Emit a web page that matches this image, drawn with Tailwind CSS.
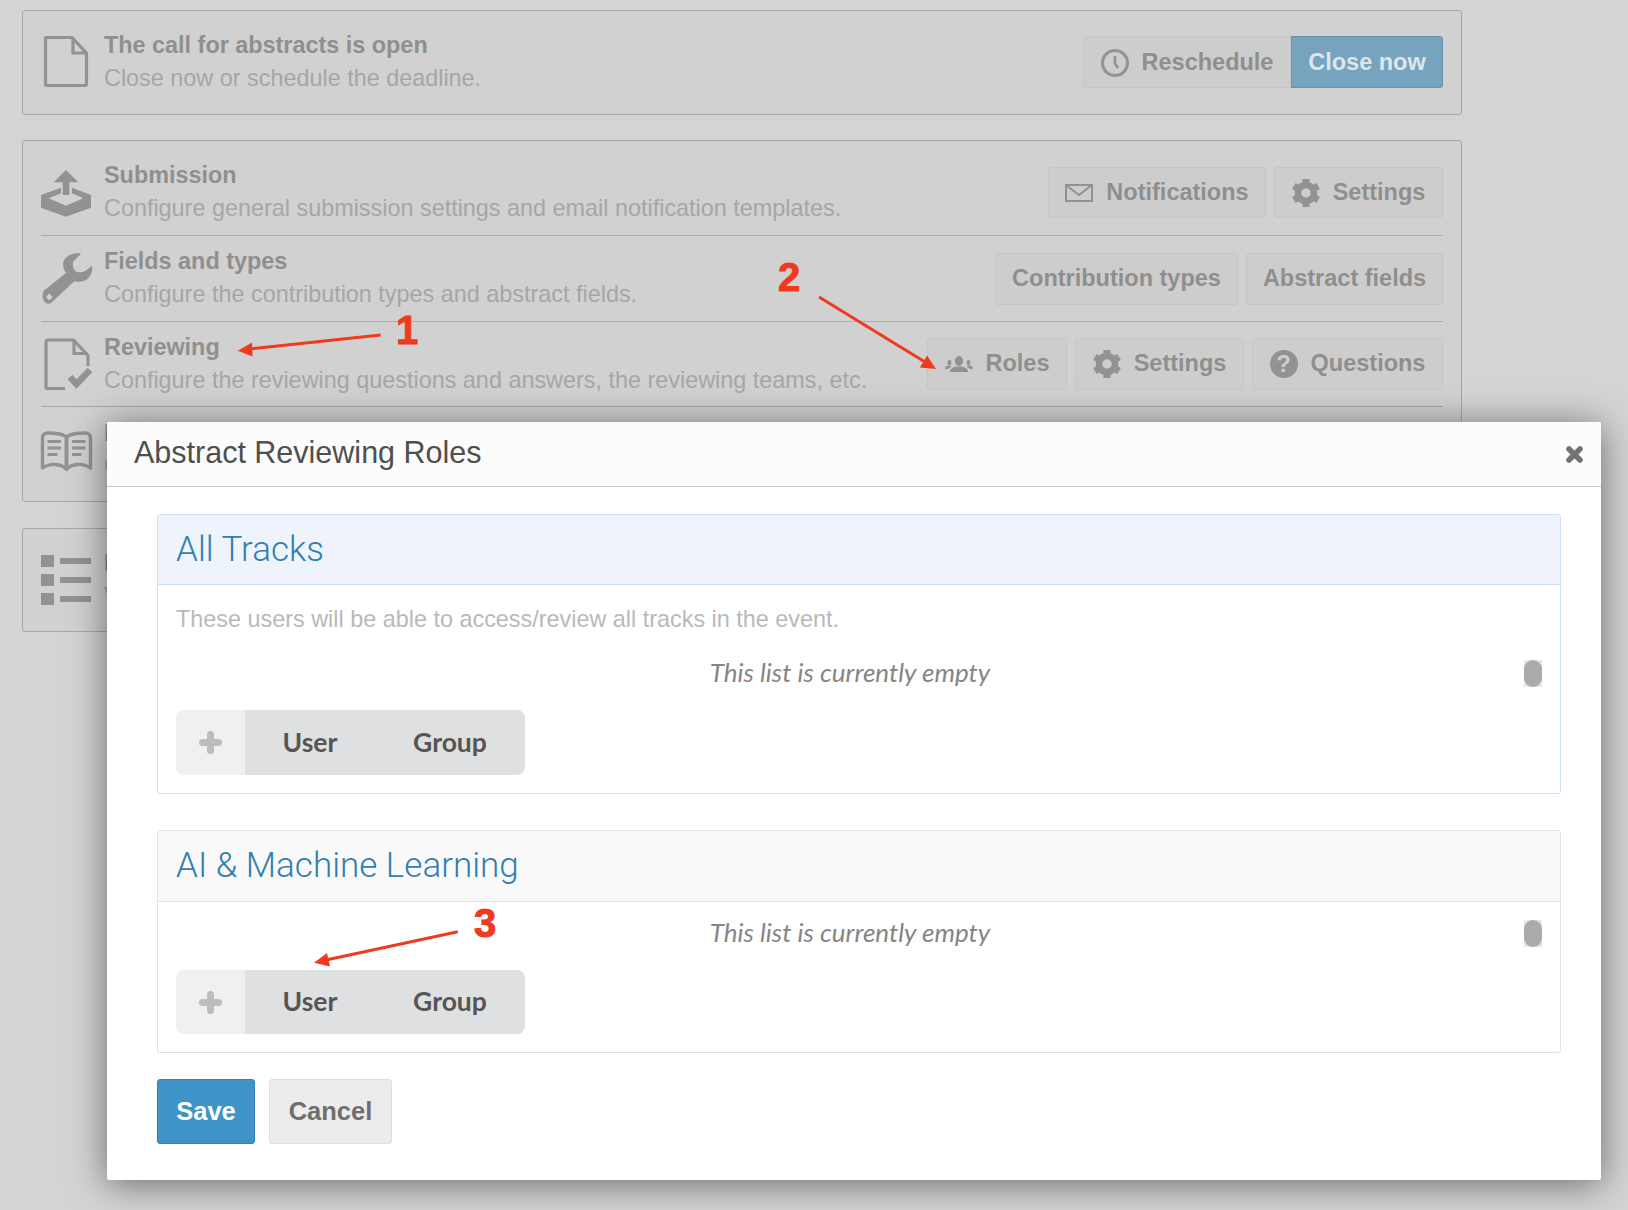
<!DOCTYPE html>
<html lang="en">
<head>
  <meta charset="UTF-8" /><meta name="viewport" content="width=device-width, initial-scale=1.0" />
  <title>Abstract Reviewing Roles</title>
  <script src="https://cdn.jsdelivr.net/npm/@tailwindcss/browser@4"></script>
</head>
<body class="bg-[#d4d4d4] font-['Liberation_Sans',Arial,sans-serif]">
  <div class="relative w-[1628px] h-[1210px] overflow-hidden">

    <!-- Page behind the dialog -->
    <div class="w-[1440px] ml-[22px] pt-[10px]">
      <div class="h-[105px] px-[18px] pb-[1px] flex items-center bg-[#d1d1d1] border border-[#a6a6a6] rounded-[3px]">
        <svg class="w-[64px] h-[64px] -ml-[5px] mr-[4px] shrink-0 text-[#929292]" viewBox="0 0 64 64" fill="none" stroke="currentColor" stroke-width="3.2">
          <path d="M10 7.5H36L50.5 23V54a1.5 1.5 0 0 1-1.5 1.5H11a1.5 1.5 0 0 1-1.5-1.5V8a.5.5 0 0 1 .5-.5z" stroke-linejoin="round"/>
          <path d="M37 8V23H50"/>
        </svg>
        <div class="flex-1">
          <div class="text-[23.4px] leading-[33px] font-bold text-[#8f8f8f]">The call for abstracts is open</div>
          <div class="text-[23.4px] leading-[33px] text-[#a6a6a6]">Close now or schedule the deadline.</div>
        </div>
        <div class="flex">
          <div class="h-[52px] w-[208px] pt-[1px] flex items-center justify-center gap-[13px] bg-[#cdcdcd] border border-[#c6c6c6] rounded-l-[3px] text-[23.5px] font-bold text-[#8f8f8f]">
            <svg class="w-[28px] h-[28px]" viewBox="0 0 28 28" fill="none" stroke="#929292" stroke-width="3"><circle cx="14" cy="14" r="12.5"/><path d="M14 7V14.5L17 19" stroke-width="2.6"/></svg>
            Reschedule
          </div>
          <div class="h-[52px] w-[152px] pt-[1px] flex items-center justify-center bg-[#76a3bd] border border-[#6a94ad] rounded-r-[3px] text-[23.5px] font-bold text-[#dfe6ea]">Close now</div>
        </div>
      </div>

      <div class="mt-[25px] h-[362px] px-[18px] pt-[9px] bg-[#d1d1d1] border border-[#a6a6a6] rounded-[3px]">
        <div class="h-[86px] flex items-center border-b border-[#aeaeae]">
          <svg class="w-[64px] h-[64px] -ml-[5px] mr-[4px] mt-[8px] shrink-0 text-[#929292]" viewBox="0 0 64 64" fill="currentColor">
            <path d="M30 5L42.3 17.3H33.3V30H26.7V17.3H17.7Z"/>
            <path d="M5 30L25 22.7V28.3L12.7 33.3L30 40.7L47.3 33.3L36 28.3V22.7L55 30V42.7L30 51.7L5 42.7Z"/>
          </svg>
          <div class="flex-1 -mt-[2px]">
            <div class="text-[23.4px] leading-[33px] font-bold text-[#8f8f8f]">Submission</div>
            <div class="text-[23.4px] leading-[33px] text-[#a6a6a6]">Configure general submission settings and email notification templates.</div>
          </div>
          <div class="flex gap-[8px]">
            <div class="h-[51px] w-[218px] flex items-center justify-center gap-[13px] bg-[#cdcdcd] border border-[#c6c6c6] rounded-[3px] text-[23.5px] font-bold text-[#8f8f8f]">
              <svg class="w-[28px] h-[18px]" viewBox="0 0 28 18" fill="none" stroke="#929292" stroke-width="2"><path d="M1 1H27V17H1Z"/><path d="M1 1L14 11L27 1"/></svg>
              Notifications
            </div>
            <div class="h-[51px] w-[169px] flex items-center justify-center gap-[13px] bg-[#cdcdcd] border border-[#c6c6c6] rounded-[3px] text-[23.5px] font-bold text-[#8f8f8f]">
              <svg class="w-[28px] h-[28px]" viewBox="0 0 28 28" fill="#929292"><circle cx="14" cy="14" r="8" fill="none" stroke="#929292" stroke-width="6.5"/><rect x="10.5" y="0" width="7" height="6"/><rect x="10.5" y="0" width="7" height="6" transform="rotate(60 14 14)"/><rect x="10.5" y="0" width="7" height="6" transform="rotate(120 14 14)"/><rect x="10.5" y="0" width="7" height="6" transform="rotate(180 14 14)"/><rect x="10.5" y="0" width="7" height="6" transform="rotate(240 14 14)"/><rect x="10.5" y="0" width="7" height="6" transform="rotate(300 14 14)"/></svg>
              Settings
            </div>
          </div>
        </div>
        <div class="h-[86px] flex items-center border-b border-[#aeaeae]">
          <svg class="w-[64px] h-[64px] -ml-[5px] mr-[4px] mt-[2px] shrink-0 text-[#929292]" viewBox="0 0 64 64" fill="currentColor">
            <path fill-rule="evenodd" d="M45 5.7L37.3 13.5C36.3 16 37 20 39 23C42 25 47 24.5 49 23L56 18C57 24 54 30 50 32C46 34 41.5 34 38.3 33.3L15 55C12 57 8.5 55 7 51C6.2 48 6.5 44.5 8 42.5L30 25C26.5 20 26 14 29.5 10C33 6.5 39 4.5 45 5.7ZM13.3 45.5L10 49L13.3 52.5L16.6 49Z"/>
          </svg>
          <div class="flex-1 -mt-[2px]">
            <div class="text-[23.4px] leading-[33px] font-bold text-[#8f8f8f]">Fields and types</div>
            <div class="text-[23.4px] leading-[33px] text-[#a6a6a6]">Configure the contribution types and abstract fields.</div>
          </div>
          <div class="flex gap-[8px]">
            <div class="h-[52px] w-[243px] flex items-center justify-center bg-[#cdcdcd] border border-[#c6c6c6] rounded-[3px] text-[23.5px] font-bold text-[#8f8f8f]">Contribution types</div>
            <div class="h-[52px] w-[197px] flex items-center justify-center bg-[#cdcdcd] border border-[#c6c6c6] rounded-[3px] text-[23.5px] font-bold text-[#8f8f8f]">Abstract fields</div>
          </div>
        </div>
        <div class="h-[85px] flex items-center border-b border-[#a6a6a6]">
          <svg class="w-[64px] h-[64px] -ml-[4px] mr-[3px] mt-[2px] shrink-0 text-[#929292]" viewBox="0 0 64 64" fill="none" stroke="currentColor" stroke-width="3.2">
            <path d="M28 55.5H10.5a1.5 1.5 0 0 1-1.5-1.5V9a2 2 0 0 1 2-2H36.5L51 22.5V33" stroke-linejoin="round"/>
            <path d="M37 8V20.5H50.5"/>
            <path d="M33 44L39.5 51L53 37" stroke-width="6.4"/>
          </svg>
          <div class="flex-1">
            <div class="text-[23.4px] leading-[33px] font-bold text-[#8f8f8f]">Reviewing</div>
            <div class="text-[23.4px] leading-[33px] text-[#a6a6a6]">Configure the reviewing questions and answers, the reviewing teams, etc.</div>
          </div>
          <div class="flex gap-[8px]">
            <div class="h-[52px] w-[140px] flex items-center justify-center gap-[13px] bg-[#cdcdcd] border border-[#c6c6c6] rounded-[3px] text-[23.5px] font-bold text-[#8f8f8f]">
              <svg class="w-[28px] h-[16px]" viewBox="0 0 28 16" fill="#929292"><ellipse cx="14" cy="5" rx="4" ry="5"/><path d="M5 16C5 12 9 10.5 14 10.5S23 12 23 16Z"/><ellipse cx="4.5" cy="6.5" rx="2" ry="2.7"/><path d="M0 13C0 10 2 9.5 4.5 9.5L6.5 10.5C5 11.5 4 12 3.5 13Z"/><ellipse cx="23.5" cy="6.5" rx="2" ry="2.7"/><path d="M28 13C28 10 26 9.5 23.5 9.5L21.5 10.5C23 11.5 24 12 24.5 13Z"/></svg>
              Roles
            </div>
            <div class="h-[52px] w-[169px] flex items-center justify-center gap-[13px] bg-[#cdcdcd] border border-[#c6c6c6] rounded-[3px] text-[23.5px] font-bold text-[#8f8f8f]">
              <svg class="w-[28px] h-[28px]" viewBox="0 0 28 28" fill="#929292"><circle cx="14" cy="14" r="8" fill="none" stroke="#929292" stroke-width="6.5"/><rect x="10.5" y="0" width="7" height="6"/><rect x="10.5" y="0" width="7" height="6" transform="rotate(60 14 14)"/><rect x="10.5" y="0" width="7" height="6" transform="rotate(120 14 14)"/><rect x="10.5" y="0" width="7" height="6" transform="rotate(180 14 14)"/><rect x="10.5" y="0" width="7" height="6" transform="rotate(240 14 14)"/><rect x="10.5" y="0" width="7" height="6" transform="rotate(300 14 14)"/></svg>
              Settings
            </div>
            <div class="h-[52px] w-[191px] flex items-center justify-center gap-[13px] bg-[#cdcdcd] border border-[#c6c6c6] rounded-[3px] text-[23.5px] font-bold text-[#8f8f8f]">
              <span class="w-[28px] h-[28px] flex items-center justify-center rounded-full bg-[#929292] text-[#cdcdcd] text-[24px] font-bold">?</span>
              Questions
            </div>
          </div>
        </div>
        <div class="h-[86px] flex items-center">
          <svg class="w-[64px] h-[50px] -ml-[5px] mr-[4px] shrink-0 text-[#929292]" viewBox="0 0 64 50" fill="none" stroke="currentColor" stroke-width="3.4">
            <path d="M30.5 12C27 9 21 8 12 8Q6.5 8 6.5 13V43C14 38 25 38 30.5 44.5C36 38 47 38 54.5 43V13Q54.5 8 49 8C40 8 34 9 30.5 12Z" stroke-linejoin="round"/>
            <path d="M30.5 12V44" stroke-width="4"/>
            <path d="M11.5 16.5H25M11.5 23H25M11.5 29.5H21.5M36 16.5H49.5M36 23H49.5M36 29.5H45.5" stroke-width="2.8"/>
          </svg>
          <div class="flex-1">
            <div class="text-[23.4px] leading-[33px] font-bold text-[#8f8f8f]">Book of Abstracts</div>
            <div class="text-[23.4px] leading-[33px] text-[#a6a6a6]">Configure the Book of Abstracts.</div>
          </div>
        </div>
      </div>

      <div class="mt-[26px] h-[104px] px-[18px] flex items-center bg-[#d1d1d1] border border-[#a6a6a6] rounded-[3px]">
        <div class="w-[50px] mr-[13px] shrink-0 flex flex-col gap-[6.5px]">
          <div class="flex items-center gap-[6px]"><span class="w-[13px] h-[12.5px] bg-[#929292]"></span><span class="flex-1 h-[6px] bg-[#929292]"></span></div>
          <div class="flex items-center gap-[6px]"><span class="w-[13px] h-[12.5px] bg-[#929292]"></span><span class="flex-1 h-[6px] bg-[#929292]"></span></div>
          <div class="flex items-center gap-[6px]"><span class="w-[13px] h-[12.5px] bg-[#929292]"></span><span class="flex-1 h-[6px] bg-[#929292]"></span></div>
        </div>
        <div class="flex-1">
          <div class="text-[23.4px] leading-[33px] font-bold text-[#8f8f8f]">Lists</div>
          <div class="text-[23.4px] leading-[33px] text-[#a6a6a6]">View the lists of abstracts.</div>
        </div>
      </div>
    </div>

    <!-- Red annotations, between page and dialog for 1 and 2 -->
    <svg class="absolute inset-0 w-[1628px] h-[1210px]" viewBox="0 0 1628 1210" fill="#f03a1f" stroke="none">
      <path d="M380.6 335L250 349" stroke="#f03a1f" stroke-width="3"/>
      <path d="M237.8 350.7L252 342.5L252.5 356.5Z"/>
      <path d="M819 297L925 362" stroke="#f03a1f" stroke-width="3"/>
      <path d="M936 369L920 367.5L927 355.5Z"/>
    </svg>
    <span class="absolute left-[396px] top-[308px] text-[40px] leading-[44px] font-bold text-[#f03a1f] [-webkit-text-stroke:1px_#f03a1f]">1</span>
    <span class="absolute left-[778px] top-[255px] text-[40px] leading-[44px] font-bold text-[#f03a1f] [-webkit-text-stroke:1px_#f03a1f]">2</span>

    <!-- Dialog -->
    <div class="absolute left-[107px] top-[422px] w-[1494px] h-[758px] bg-white rounded-[2px] shadow-[0_4px_36px_rgba(0,0,0,0.5)]">
      <div class="h-[65px] flex items-center justify-between pl-[27px] pr-[18px] pb-[4px] bg-[#fcfcfc] border-b border-[#c9c9c9] rounded-t-[2px]">
        <h2 class="text-[30.5px] leading-[58px] text-[#4f4f4f]">Abstract Reviewing Roles</h2>
        <svg class="w-[17px] h-[17px] mt-[4px]" viewBox="0 0 17 17" stroke="#737373" stroke-width="5.5" stroke-linecap="round"><path d="M3 3L14 14M14 3L3 14"/></svg>
      </div>
      <div class="pl-[50px] pr-[40px] pt-[27px]">
        <div class="border border-[#cfe0fb] rounded-[3px]">
          <div class="h-[70px] pt-[1px] flex items-center px-[18px] bg-[#eef3fc] border-b border-[#cfe0fb]">
            <h3 class="font-['Roboto',sans-serif] font-light text-[35px] text-[#2f7fb1]">All Tracks</h3>
          </div>
          <div class="px-[18px] pt-[18px] pb-[18px]">
            <p class="text-[23.4px] leading-[33px] text-[#b9b9b9]">These users will be able to access/review all tracks in the event.</p>
            <div class="mt-[24px] flex items-center">
              <span class="flex-1 text-center font-['Lato',sans-serif] italic text-[26px] leading-[27px] -mt-[3px] text-[#858585]">This list is currently empty</span>
              <span class="w-[18px] h-[27px] bg-[#e6e6e6]"><span class="block w-[18px] h-[27px] rounded-full bg-[#aaaaaa]"></span></span>
            </div>
            <div class="mt-[23px] w-[349px] h-[65px] flex rounded-[8px] overflow-hidden font-['Lato',sans-serif] font-bold text-[26.5px] text-[#555]">
              <span class="w-[69px] flex items-center justify-center bg-[#f0f0f0]">
                <svg class="w-[23px] h-[23px]" viewBox="0 0 23 23" stroke="#bcbcbc" stroke-width="7" stroke-linecap="round"><path d="M11.5 3.5V19.5M3.5 11.5H19.5"/></svg>
              </span>
              <span class="w-[130px] flex items-center justify-center bg-[#dfe0e2]">User</span>
              <span class="w-[150px] flex items-center justify-center bg-[#dfe0e2]">Group</span>
            </div>
          </div>
        </div>

        <div class="mt-[36px] border border-[#e2e2e2] rounded-[3px]">
          <div class="h-[71px] flex items-center px-[18px] bg-[#f9f9f9] border-b border-[#e2e2e2]">
            <h3 class="font-['Roboto',sans-serif] font-light text-[35px] text-[#2f7fb1]">AI &amp; Machine Learning</h3>
          </div>
          <div class="px-[18px] pt-[18px] pb-[18px]">
            <div class="flex items-center">
              <span class="flex-1 text-center font-['Lato',sans-serif] italic text-[26px] leading-[27px] -mt-[3px] text-[#858585]">This list is currently empty</span>
              <span class="w-[18px] h-[27px] bg-[#e6e6e6]"><span class="block w-[18px] h-[27px] rounded-full bg-[#aaaaaa]"></span></span>
            </div>
            <div class="mt-[23px] w-[349px] h-[64px] flex rounded-[8px] overflow-hidden font-['Lato',sans-serif] font-bold text-[26.5px] text-[#555]">
              <span class="w-[69px] flex items-center justify-center bg-[#f0f0f0]">
                <svg class="w-[23px] h-[23px]" viewBox="0 0 23 23" stroke="#bcbcbc" stroke-width="7" stroke-linecap="round"><path d="M11.5 3.5V19.5M3.5 11.5H19.5"/></svg>
              </span>
              <span class="w-[130px] flex items-center justify-center bg-[#dfe0e2]">User</span>
              <span class="w-[150px] flex items-center justify-center bg-[#dfe0e2]">Group</span>
            </div>
          </div>
        </div>

        <div class="mt-[26px] flex gap-[14px] text-[25.5px] font-bold">
          <button class="w-[98px] h-[65px] bg-[#3f94c8] border border-[#3a80ae] rounded-[3px] text-white">Save</button>
          <button class="w-[123px] h-[65px] bg-[#ececec] border border-[#dedede] rounded-[3px] text-[#6e6e6e]">Cancel</button>
        </div>
      </div>
    </div>

    <!-- Arrow 3 sits on the dialog -->
    <svg class="absolute inset-0 w-[1628px] h-[1210px]" viewBox="0 0 1628 1210" fill="#f03a1f" stroke="none">
      <path d="M457.8 931.7L326 960" stroke="#f03a1f" stroke-width="3"/>
      <path d="M314 962.7L327 953L330 966.5Z"/>
    </svg>
    <span class="absolute left-[474px] top-[901px] text-[40px] leading-[44px] font-bold text-[#f03a1f] [-webkit-text-stroke:1px_#f03a1f]">3</span>
  </div>
</body>
</html>
